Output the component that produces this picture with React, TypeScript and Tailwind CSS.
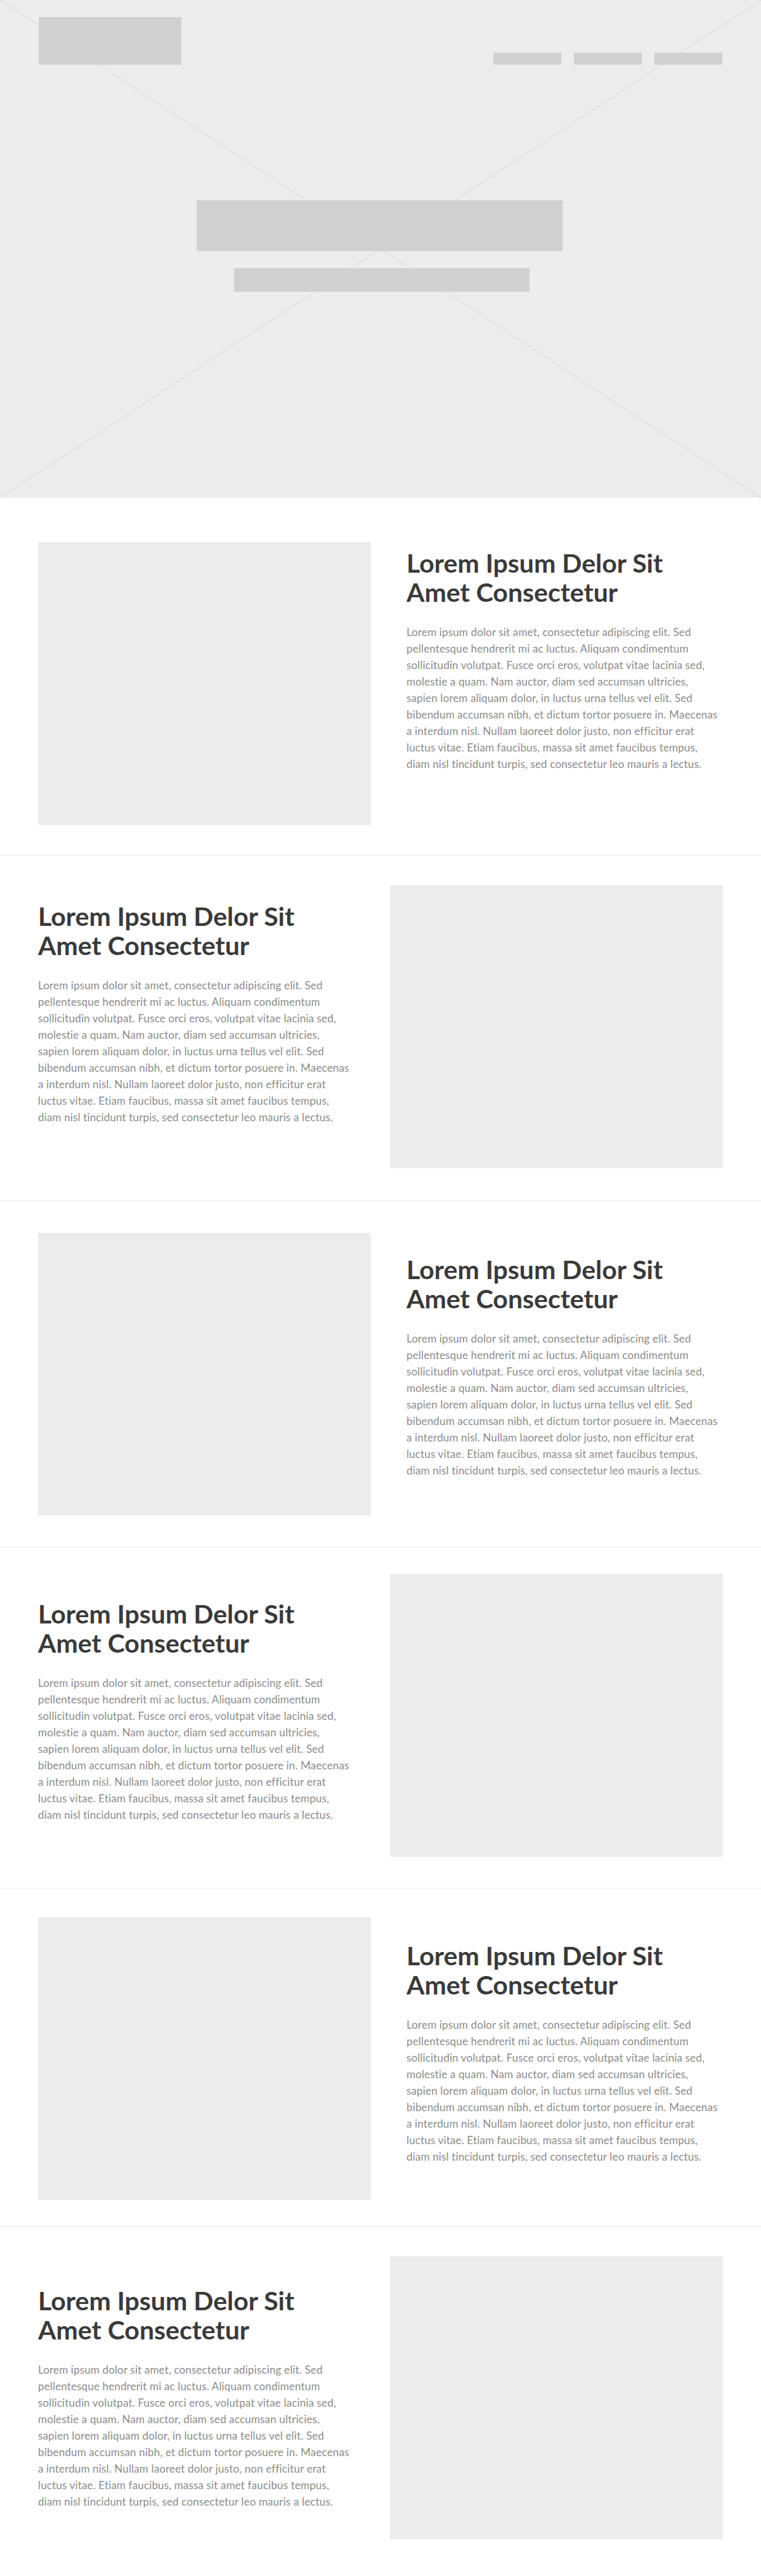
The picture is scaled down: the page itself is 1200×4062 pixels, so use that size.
import React from "react";

const PARA =
  "Lorem ipsum dolor sit amet, consectetur adipiscing elit. Sed pellentesque hendrerit mi ac luctus. Aliquam condimentum sollicitudin volutpat. Fusce orci eros, volutpat vitae lacinia sed, molestie a quam. Nam auctor, diam sed accumsan ultricies, sapien lorem aliquam dolor, in luctus urna tellus vel elit. Sed bibendum accumsan nibh, et dictum tortor posuere in. Maecenas a interdum nisl. Nullam laoreet dolor justo, non efficitur erat luctus vitae. Etiam faucibus, massa sit amet faucibus tempus, diam nisl tincidunt turpis, sed consectetur leo mauris a lectus.";

type Sec = { left: boolean; pad: string; textPad: string; border: boolean };

const sections: Sec[] = [
  { left: true, pad: "pt-[70px] pb-[47px]", textPad: "pt-[10px]", border: true },
  { left: false, pad: "pt-[47px] pb-[51px]", textPad: "pt-[26px]", border: true },
  { left: true, pad: "pt-[50px] pb-[49px]", textPad: "pt-[35px]", border: true },
  { left: false, pad: "pt-[42px] pb-[49px]", textPad: "pt-[40px]", border: true },
  { left: true, pad: "pt-[45px] pb-[41px]", textPad: "pt-[38px]", border: true },
  { left: false, pad: "pt-[47px] pb-[58px]", textPad: "pt-[47px]", border: false },
];

function TextBlock({ textPad }: { textPad: string }) {
  return (
    <div className={`w-[499px] shrink-0 ${textPad}`}>
      <h2 className="text-[41px] leading-[46px] font-bold text-[#3a3a3a]">
        Lorem Ipsum Delor Sit
        <br />
        Amet Consectetur
      </h2>
      <p className="mt-[27px] pr-[6px] text-[17px] leading-[26px] tracking-[0.15px] text-[#8c8c8c]">
        {PARA}
      </p>
    </div>
  );
}

function ImageBox() {
  return <div className="w-[525px] h-[446px] shrink-0 bg-[#ececec]" />;
}

export default function App() {
  return (
    <div
      className="w-[1200px] bg-white"
      style={{ fontFamily: "Lato, 'Open Sans', sans-serif" }}
    >
      {/* Hero */}
      <div className="relative h-[785px] bg-[#ededed] overflow-hidden">
        <svg
          className="absolute inset-0 w-full h-full"
          viewBox="0 0 1200 785"
          preserveAspectRatio="none"
        >
          <line x1="0" y1="0" x2="1200" y2="785" stroke="#d2d2d2" strokeWidth="1" />
          <line x1="1200" y1="0" x2="0" y2="785" stroke="#d2d2d2" strokeWidth="1" />
        </svg>
        <div className="relative flex flex-col h-full">
          <div className="flex items-end justify-between pl-[61px] pr-[61px] pt-[27px]">
            <div className="w-[225px] h-[75px] bg-[#d0d0d0]" />
            <nav className="flex gap-[20px]">
              <div className="w-[107px] h-[19px] bg-[#d0d0d0]" />
              <div className="w-[107px] h-[19px] bg-[#d0d0d0]" />
              <div className="w-[107px] h-[19px] bg-[#d0d0d0]" />
            </nav>
          </div>
          <div className="flex flex-col items-start mt-[214px]">
            <div className="w-[577px] h-[80px] bg-[#d0d0d0] ml-[310px]" />
            <div className="w-[466px] h-[37px] bg-[#d0d0d0] mt-[27px] ml-[369px]" />
          </div>
        </div>
      </div>

      {sections.map((s, i) => (
        <section
          key={i}
          className={`${s.pad} ${s.border ? "border-b border-[#e8e8e8]" : ""}`}
        >
          <div className="mx-[60px] flex items-start gap-[56px]">
            {s.left ? (
              <>
                <ImageBox />
                <TextBlock textPad={s.textPad} />
              </>
            ) : (
              <>
                <TextBlock textPad={s.textPad} />
                <ImageBox />
              </>
            )}
          </div>
        </section>
      ))}
    </div>
  );
}
